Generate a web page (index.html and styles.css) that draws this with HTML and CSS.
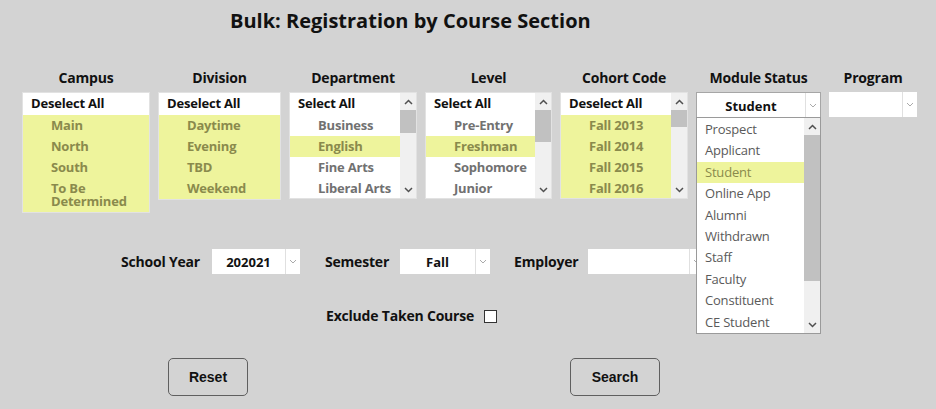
FILE: index.html
```html
<!DOCTYPE html>
<html>
<head>
<meta charset="utf-8">
<title>Bulk: Registration by Course Section</title>
<link rel="stylesheet" href="styles.css">
</head>
<body>
<div class="page">
  <h1 class="title">Bulk: Registration by Course Section</h1>

  <div class="filters">
    <div class="col w128">
      <div class="col-label">Campus</div>
      <div class="listbox">
        <div class="opt head">Deselect All</div>
        <div class="opt sel">Main</div>
        <div class="opt sel">North</div>
        <div class="opt sel">South</div>
        <div class="opt sel">To Be Determined</div>
      </div>
    </div>

    <div class="col w123">
      <div class="col-label">Division</div>
      <div class="listbox">
        <div class="opt head">Deselect All</div>
        <div class="opt sel">Daytime</div>
        <div class="opt sel">Evening</div>
        <div class="opt sel">TBD</div>
        <div class="opt sel">Weekend</div>
      </div>
    </div>

    <div class="col w128">
      <div class="col-label">Department</div>
      <div class="listbox scroll">
        <div class="items">
          <div class="opt head">Select All</div>
          <div class="opt">Business</div>
          <div class="opt sel">English</div>
          <div class="opt">Fine Arts</div>
          <div class="opt">Liberal Arts</div>
        </div>
        <div class="sbar">
          <span class="sb-btn"><svg width="9" height="6" viewBox="0 0 9 6"><path d="M1 5 L4.5 1.5 L8 5" fill="none" stroke="#505050" stroke-width="1.5"/></svg></span>
          <div class="sb-track"><div class="sb-thumb" style="height:23px"></div></div>
          <span class="sb-btn"><svg width="9" height="6" viewBox="0 0 9 6"><path d="M1 1 L4.5 4.5 L8 1" fill="none" stroke="#505050" stroke-width="1.5"/></svg></span>
        </div>
      </div>
    </div>

    <div class="col w127">
      <div class="col-label">Level</div>
      <div class="listbox scroll">
        <div class="items">
          <div class="opt head">Select All</div>
          <div class="opt">Pre-Entry</div>
          <div class="opt sel">Freshman</div>
          <div class="opt">Sophomore</div>
          <div class="opt">Junior</div>
        </div>
        <div class="sbar">
          <span class="sb-btn"><svg width="9" height="6" viewBox="0 0 9 6"><path d="M1 5 L4.5 1.5 L8 5" fill="none" stroke="#505050" stroke-width="1.5"/></svg></span>
          <div class="sb-track"><div class="sb-thumb" style="height:32px"></div></div>
          <span class="sb-btn"><svg width="9" height="6" viewBox="0 0 9 6"><path d="M1 1 L4.5 4.5 L8 1" fill="none" stroke="#505050" stroke-width="1.5"/></svg></span>
        </div>
      </div>
    </div>

    <div class="col w128">
      <div class="col-label">Cohort Code</div>
      <div class="listbox scroll">
        <div class="items">
          <div class="opt head">Deselect All</div>
          <div class="opt sel">Fall 2013</div>
          <div class="opt sel">Fall 2014</div>
          <div class="opt sel">Fall 2015</div>
          <div class="opt sel">Fall 2016</div>
        </div>
        <div class="sbar">
          <span class="sb-btn"><svg width="9" height="6" viewBox="0 0 9 6"><path d="M1 5 L4.5 1.5 L8 5" fill="none" stroke="#505050" stroke-width="1.5"/></svg></span>
          <div class="sb-track"><div class="sb-thumb" style="height:17px"></div></div>
          <span class="sb-btn"><svg width="9" height="6" viewBox="0 0 9 6"><path d="M1 1 L4.5 4.5 L8 1" fill="none" stroke="#505050" stroke-width="1.5"/></svg></span>
        </div>
      </div>
    </div>

    <div class="col w125 module">
      <div class="col-label">Module Status</div>
      <div class="select bordered">
        <span class="val">Student</span>
        <span class="arr"><svg width="8" height="5" viewBox="0 0 8 5"><path d="M1 1 L4 4 L7 1" fill="none" stroke="#aaaaaa" stroke-width="1"/></svg></span>
      </div>
      <div class="dropdown">
        <div class="dd-items">
          <div class="dd-opt">Prospect</div>
          <div class="dd-opt">Applicant</div>
          <div class="dd-opt sel">Student</div>
          <div class="dd-opt">Online App</div>
          <div class="dd-opt">Alumni</div>
          <div class="dd-opt">Withdrawn</div>
          <div class="dd-opt">Staff</div>
          <div class="dd-opt">Faculty</div>
          <div class="dd-opt">Constituent</div>
          <div class="dd-opt">CE Student</div>
        </div>
        <div class="sbar">
          <span class="sb-btn"><svg width="9" height="6" viewBox="0 0 9 6"><path d="M1 5 L4.5 1.5 L8 5" fill="none" stroke="#505050" stroke-width="1.5"/></svg></span>
          <div class="sb-track"><div class="sb-thumb" style="height:146px"></div></div>
          <span class="sb-btn"><svg width="9" height="6" viewBox="0 0 9 6"><path d="M1 1 L4.5 4.5 L8 1" fill="none" stroke="#505050" stroke-width="1.5"/></svg></span>
        </div>
      </div>
    </div>

    <div class="col w88">
      <div class="col-label">Program</div>
      <div class="select">
        <span class="val"></span>
        <span class="arr"><svg width="8" height="5" viewBox="0 0 8 5"><path d="M1 1 L4 4 L7 1" fill="none" stroke="#aaaaaa" stroke-width="1"/></svg></span>
      </div>
    </div>
  </div>

  <div class="row2">
    <div class="field">
      <span class="field-label">School Year</span>
      <div class="select s88">
        <span class="val">202021</span>
        <span class="arr"><svg width="8" height="5" viewBox="0 0 8 5"><path d="M1 1 L4 4 L7 1" fill="none" stroke="#aaaaaa" stroke-width="1"/></svg></span>
      </div>
    </div>
    <div class="field sem">
      <span class="field-label">Semester</span>
      <div class="select s90">
        <span class="val">Fall</span>
        <span class="arr"><svg width="8" height="5" viewBox="0 0 8 5"><path d="M1 1 L4 4 L7 1" fill="none" stroke="#aaaaaa" stroke-width="1"/></svg></span>
      </div>
    </div>
    <div class="field emp">
      <span class="field-label">Employer</span>
      <div class="select s116">
        <span class="val"></span>
        <span class="arr"><svg width="8" height="5" viewBox="0 0 8 5"><path d="M1 1 L4 4 L7 1" fill="none" stroke="#aaaaaa" stroke-width="1"/></svg></span>
      </div>
    </div>
  </div>

  <div class="row3">
    <span class="field-label">Exclude Taken Course</span>
    <span class="checkbox"></span>
  </div>

  <div class="buttons">
    <button class="btn reset">Reset</button>
    <button class="btn search">Search</button>
  </div>
</div>
</body>
</html>
```

FILE: styles.css
```css
* { box-sizing: border-box; }

body {
  margin: 0;
  background: #d3d3d3;
  font-family: "Open Sans", Lato, sans-serif;
  color: #111;
}

.page {
  width: 936px;
  height: 409px;
  overflow: hidden;
}

.title {
  margin: 0;
  padding: 9px 0 0 230px;
  font-size: 20px;
  font-weight: 700;
  line-height: 24px;
}

.filters {
  display: flex;
  align-items: flex-start;
  gap: 8px;
  padding-left: 22px;
  margin-top: 36px;
}

.col { display: flex; flex-direction: column; }
.w128 { width: 128px; }
.w127 { width: 127px; }
.w125 { width: 125px; }
.w123 { width: 123px; }
.w88 { width: 88px; }

.col-label {
  text-align: center;
  font-weight: 700;
  font-size: 14px;
  line-height: 17px;
  margin-bottom: 6px;
  white-space: nowrap;
  letter-spacing: -0.2px;
}

.listbox {
  background: #fff;
  border: 1px solid #e2e2e2;
  font-size: 13px;
  font-weight: 700;
  letter-spacing: -0.2px;
}

.listbox.scroll {
  display: flex;
  height: 107px;
  overflow: hidden;
}

.items { flex: 1; overflow: hidden; }

.opt {
  padding: 4px 4px 4px 28px;
  line-height: 13px;
  color: #717171;
}

.opt.head {
  padding: 4px 4px 5px 8px;
  color: #111;
}

.opt.sel {
  background: #eef49c;
  color: #8a8a4c;
}

.sbar {
  width: 16px;
  flex: none;
  background: #f0f0f0;
  display: flex;
  flex-direction: column;
}

.sb-btn {
  height: 17px;
  display: flex;
  align-items: center;
  justify-content: center;
  flex: none;
}

.sb-track { flex: 1; }

.sb-thumb {
  background: #c1c1c1;
  width: 100%;
}

.module { position: relative; }

.select {
  display: flex;
  height: 25px;
  background: #fff;
  font-size: 13px;
  font-weight: 700;
  color: #111;
}

.select.bordered {
  height: 26px;
  border: 1px solid #a6a6a6;
}

.select .val {
  flex: 1;
  text-align: center;
  line-height: 25px;
  padding-top: 1px;
}

.select .arr {
  width: 15px;
  flex: none;
  border-left: 1px solid #e0e0e0;
  display: flex;
  align-items: center;
  justify-content: center;
}

.s88 { width: 88px; }
.s90 { width: 90px; }
.s116 { width: 116px; }

.dropdown {
  position: absolute;
  top: 48px;
  left: 0;
  width: 125px;
  height: 217px;
  background: #fff;
  border: 1px solid #9a9a9a;
  display: flex;
  z-index: 2;
}

.dd-items { flex: 1; padding-top: 1px; }

.dd-opt {
  height: 21.4px;
  line-height: 21.4px;
  padding-left: 8px;
  font-size: 13px;
  color: #5a5a5a;
  letter-spacing: -0.2px;
}

.dd-opt.sel { background: #eef49c; color: #8a8a4c; }

.row2 {
  display: flex;
  align-items: center;
  margin-top: 36px;
  padding-left: 121px;
}

.field {
  display: flex;
  align-items: center;
  gap: 12px;
}

.field.sem { margin-left: 25px; gap: 11px; }
.field.emp { margin-left: 24px; gap: 10px; }

.field-label {
  font-size: 14px;
  font-weight: 700;
  white-space: nowrap;
  letter-spacing: -0.2px;
}

.row3 {
  display: flex;
  align-items: center;
  gap: 10px;
  margin-top: 33px;
  padding-left: 326px;
  height: 17px;
}

.checkbox {
  width: 13px;
  height: 13px;
  background: #fff;
  border: 1px solid #333;
  margin-top: 2px;
}

.buttons {
  display: flex;
  margin-top: 34px;
  padding-left: 168px;
}

.btn {
  height: 38px;
  border: 1px solid #5f5f5f;
  border-radius: 5px;
  background: transparent;
  font-family: "Liberation Sans", Arial, sans-serif;
  font-weight: 700;
  font-size: 14px;
  color: #111;
  padding: 0;
}

.reset { width: 80px; }
.search { width: 90px; margin-left: 322px; }
```
